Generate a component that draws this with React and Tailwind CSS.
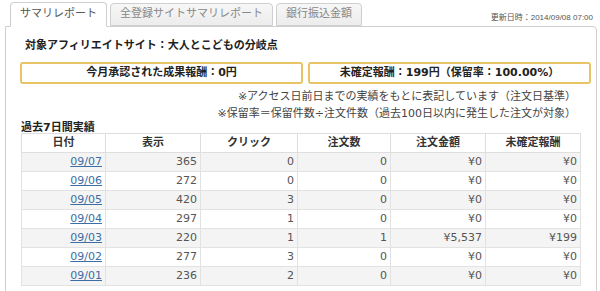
const rows = [
  { date: "09/07", imp: 365, click: 0, orders: 0, amount: "¥0", pending: "¥0" },
  { date: "09/06", imp: 272, click: 0, orders: 0, amount: "¥0", pending: "¥0" },
  { date: "09/05", imp: 420, click: 3, orders: 0, amount: "¥0", pending: "¥0" },
  { date: "09/04", imp: 297, click: 1, orders: 0, amount: "¥0", pending: "¥0" },
  { date: "09/03", imp: 220, click: 1, orders: 1, amount: "¥5,537", pending: "¥199" },
  { date: "09/02", imp: 277, click: 3, orders: 0, amount: "¥0", pending: "¥0" },
  { date: "09/01", imp: 236, click: 2, orders: 0, amount: "¥0", pending: "¥0" },
];

const tabs = [
  { label: "サマリレポート", w: "w-[97px]", active: true },
  { label: "全登録サイトサマリレポート", w: "w-[163px]" },
  { label: "銀行振込金額", w: "w-[86px]" },
];

export default function App() {
  return (
    <div className="w-[600px] h-[291px] overflow-hidden bg-white text-[#333] font-['DejaVu_Sans','Noto_Sans_CJK_JP',sans-serif]">
      {/* Tabs */}
      <div className="flex items-end h-[27px] pt-[2px] pl-[10px] pr-[7px]">
        {tabs.map((t) => (
          <div
            key={t.label}
            className={`${t.w} mr-[3px] flex items-center justify-center rounded-t-[4px] border border-[#cfcfcf] text-[11px] ${
              t.active
                ? "h-[25px] bg-white border-b-white text-[#555] relative z-10"
                : "h-[23px] mb-px bg-gradient-to-b from-[#f7f7f7] to-[#ececec] text-[#888]"
            }`}
          >
            {t.label}
          </div>
        ))}
        <div className="ml-auto self-center mt-[6px] text-[8px] text-[#555] font-['Liberation_Sans','Noto_Sans_CJK_JP',sans-serif]">
          更新日時：2014/09/08 07:00
        </div>
      </div>

      {/* Panel */}
      <div className="ml-[5px] w-[592px] h-[280px] -mt-px border border-[#cfcfcf] rounded-tr-[4px]">
        <div className="pl-[19px] pt-[11px] text-[11px] font-bold leading-[16px] text-[#222]">
          対象アフィリエイトサイト：大人とこどもの分岐点
        </div>

        {/* Summary boxes */}
        <div className="flex gap-[5px] mt-[8px] ml-[14px] w-[571px]">
          <div className="flex-1 h-[22px] flex items-center justify-center rounded-[3px] border-2 border-[#e8c466] text-[11px] font-bold text-[#222]">
            今月承認された成果報酬：0円
          </div>
          <div className="flex-1 h-[22px] flex items-center justify-center rounded-[3px] border-2 border-[#e8c466] text-[11px] font-bold text-[#222]">
            未確定報酬：199円（保留率：100.00%）
          </div>
        </div>

        {/* Notes */}
        <div className="mt-[4px] pr-[20px] text-right text-[11px] leading-[17px] text-[#444]">
          <p>※アクセス日前日までの実績をもとに表記しています（注文日基準）</p>
          <p>※保留率＝保留件数÷注文件数（過去100日以内に発生した注文が対象）</p>
        </div>

        <div className="ml-[15px] mt-[1px] text-[11px] font-bold leading-[10px] text-[#222]">
          過去7日間実績
        </div>

        {/* Table */}
        <table className="ml-[15px] w-[559px] table-fixed border-collapse text-[11px]">
          <colgroup>
            <col className="w-[84px]" />
            <col className="w-[95px]" />
            <col className="w-[97px]" />
            <col className="w-[93px]" />
            <col className="w-[95px]" />
            <col className="w-[95px]" />
          </colgroup>
          <thead>
            <tr className="h-[19px] bg-white">
              {["日付", "表示", "クリック", "注文数", "注文金額", "未確定報酬"].map((h) => (
                <th key={h} className="border border-[#dedede] p-0 text-center font-bold text-[#333]">
                  {h}
                </th>
              ))}
            </tr>
          </thead>
          <tbody>
            {rows.map((r, i) => (
              <tr key={r.date} className={`h-[19px] ${i % 2 === 0 ? "bg-[#f4f4f4]" : "bg-white"}`}>
                <td className="border border-[#e2e2e2] py-0 pr-[3px] text-right">
                  <a href="#" className="text-[#3b6ea5] underline">
                    {r.date}
                  </a>
                </td>
                <td className="border border-[#e2e2e2] py-0 pr-[3px] text-right text-[#555]">{r.imp}</td>
                <td className="border border-[#e2e2e2] py-0 pr-[3px] text-right text-[#555]">{r.click}</td>
                <td className="border border-[#e2e2e2] py-0 pr-[3px] text-right text-[#555]">{r.orders}</td>
                <td className="border border-[#e2e2e2] py-0 pr-[3px] text-right text-[#555]">{r.amount}</td>
                <td className="border border-[#e2e2e2] py-0 pr-[3px] text-right text-[#555]">{r.pending}</td>
              </tr>
            ))}
          </tbody>
        </table>
      </div>
    </div>
  );
}
